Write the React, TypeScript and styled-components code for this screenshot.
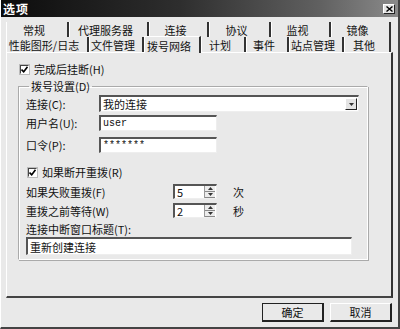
import { createGlobalStyle, styled } from "styled-components";

const GlobalStyle = createGlobalStyle`
  html, body {
    margin: 0;
    padding: 0;
    background: #e9e9e9;
  }
  * {
    box-sizing: border-box;
  }
`;

const font = `"Noto Sans CJK SC", "Liberation Sans", sans-serif`;

const Window = styled.div`
  width: 400px;
  height: 329px;
  background: #e9e9e9;
  border-right: 2px solid #444;
  border-bottom: 2px solid #444;
  border-left: 1px solid #fff;
  font-family: ${font};
  font-size: 11px;
  line-height: 12px;
  color: #111;
  display: flex;
  flex-direction: column;
  overflow: hidden;
`;

const TitleBar = styled.div`
  height: 17px;
  flex: none;
  display: flex;
  align-items: center;
  justify-content: space-between;
  padding: 0 3px 0 2px;
  background: linear-gradient(to right, #0c0c0c, #2e2e2e 45%, #606060 80%, #8a8a8a);
`;

const Title = styled.span`
  color: #fff;
  font-weight: bold;
  font-size: 12px;
  letter-spacing: 1px;
`;

const CloseButton = styled.div`
  width: 12px;
  height: 10px;
  background: #e4e4e4;
  border-top: 1px solid #fff;
  border-left: 1px solid #fff;
  border-right: 1px solid #222;
  border-bottom: 1px solid #222;
  display: flex;
  align-items: center;
  justify-content: center;
`;

const Body = styled.div`
  flex: 1;
  display: flex;
  flex-direction: column;
  padding: 5px 5px 0 5px;
`;

const TabRow = styled.div`
  display: flex;
  align-items: flex-start;
  height: 15px;
  flex: none;
`;

const Tab = styled.div<{ $w: number; $active?: boolean }>`
  width: ${(p) => p.$w}px;
  height: ${(p) => (p.$active ? 17 : 15)}px;
  margin-top: ${(p) => (p.$active ? -1 : 0)}px;
  display: flex;
  align-items: center;
  justify-content: center;
  padding: 1px 6px 0 0;
  border-right: 2px solid #333;
  border-left: 1px solid #fff;
  border-top: ${(p) => (p.$active ? "1px solid #fff" : "none")};
  background: #e9e9e9;
  font-size: 11px;
  line-height: 12px;
  white-space: nowrap;
  position: relative;
  z-index: ${(p) => (p.$active ? 2 : 1)};
`;

const Panel = styled.div`
  width: 387px;
  height: 246px;
  flex: none;
  border-top: 1px solid #fff;
  border-left: 1px solid #fff;
  border-right: 2px solid #333;
  border-bottom: 2px solid #444;
  padding: 10px 0 0 13px;
  display: flex;
  flex-direction: column;
`;

const CheckRow = styled.label<{ $mt?: number; $ml?: number }>`
  display: flex;
  align-items: center;
  gap: 5px;
  height: 12px;
  flex: none;
  margin-top: ${(p) => p.$mt ?? 0}px;
  margin-left: ${(p) => p.$ml ?? 0}px;
`;

const Box = styled.span`
  width: 9px;
  height: 9px;
  background: #fff;
  border-top: 1px solid #444;
  border-left: 1px solid #444;
  border-right: 1px solid #fff;
  border-bottom: 1px solid #fff;
  outline: 1px solid #bbb;
  display: flex;
  align-items: center;
  justify-content: center;
`;

const GroupBox = styled.fieldset`
  margin: 5px 0 0 -2px;
  width: 350px;
  height: 180px;
  flex: none;
  padding: 0 0 0 7px;
  border: 1px solid #aaa;
  border-right-color: #fff;
  border-bottom-color: #fff;
  box-shadow: 1px 1px 0 #aaa, inset 1px 1px 0 #fff;
  display: flex;
  flex-direction: column;
`;

const Legend = styled.legend`
  padding: 0 2px;
  margin-left: 3px;
  font-size: 11px;
  line-height: 12px;
`;

const FieldRow = styled.div<{ $mt?: number }>`
  display: flex;
  align-items: center;
  flex: none;
  margin-top: ${(p) => p.$mt ?? 0}px;
`;

const FieldLabel = styled.span<{ $w: number }>`
  width: ${(p) => p.$w}px;
  flex: none;
  white-space: nowrap;
`;

const Input = styled.div<{ $w: number; $h?: number; $mono?: boolean }>`
  width: ${(p) => p.$w}px;
  height: ${(p) => p.$h ?? 16}px;
  background: #fff;
  border-top: 2px solid #555;
  border-left: 2px solid #555;
  border-right: 1px solid #eee;
  border-bottom: 1px solid #eee;
  display: flex;
  align-items: center;
  justify-content: space-between;
  padding-left: 2px;
  font-family: ${(p) => (p.$mono ? `"Liberation Mono", monospace` : font)};
  font-size: ${(p) => (p.$mono ? 10 : 11)}px;
  white-space: nowrap;
`;

const DropButton = styled.span`
  width: 12px;
  height: 12px;
  margin-right: 1px;
  background: #e4e4e4;
  border-top: 1px solid #fff;
  border-left: 1px solid #fff;
  border-right: 1px solid #222;
  border-bottom: 1px solid #222;
  display: flex;
  align-items: center;
  justify-content: center;
`;

const SpinButtons = styled.span`
  width: 11px;
  height: 12px;
  margin-right: 1px;
  display: flex;
  flex-direction: column;
  border-left: 1px solid #999;
`;

const SpinHalf = styled.span`
  flex: 1;
  background: #ececec;
  border-bottom: 1px solid #888;
  display: flex;
  align-items: center;
  justify-content: center;
`;

const Unit = styled.span`
  margin-left: 16px;
`;

const Footer = styled.div`
  display: flex;
  justify-content: flex-end;
  gap: 6px;
  padding: 5px 1px 0 0;
`;

const Button = styled.div<{ $default?: boolean }>`
  width: 62px;
  height: 19px;
  display: flex;
  align-items: center;
  justify-content: center;
  background: #e9e9e9;
  border-top: 1px solid ${(p) => (p.$default ? "#222" : "#fff")};
  border-left: 1px solid ${(p) => (p.$default ? "#222" : "#fff")};
  border-right: 2px solid #222;
  border-bottom: 2px solid #222;
  font-size: 11px;
`;

const Arrow = ({ up }: { up?: boolean }) => (
  <svg width="5" height="3" viewBox="0 0 5 3">
    <path d={up ? "M2.5 0 L5 3 L0 3 Z" : "M0 0 L5 0 L2.5 3 Z"} fill="#333" />
  </svg>
);

const Check = () => (
  <svg width="7" height="7" viewBox="0 0 7 7">
    <path d="M0.5 3.5 L2.7 5.8 L6.5 0.8" stroke="#000" strokeWidth="1.6" fill="none" />
  </svg>
);

const Spin = () => (
  <SpinButtons>
    <SpinHalf>
      <Arrow up />
    </SpinHalf>
    <SpinHalf>
      <Arrow />
    </SpinHalf>
  </SpinButtons>
);

export default function App() {
  return (
    <>
      <GlobalStyle />
      <Window>
        <TitleBar>
          <Title>选项</Title>
          <CloseButton>
            <svg width="7" height="6" viewBox="0 0 7 6">
              <path d="M0.5 0.5 L6.5 5.5 M6.5 0.5 L0.5 5.5" stroke="#000" strokeWidth="1.4" />
            </svg>
          </CloseButton>
        </TitleBar>
        <Body>
          <TabRow>
            <Tab $w={63}>常规</Tab>
            <Tab $w={80}>代理服务器</Tab>
            <Tab $w={60}>连接</Tab>
            <Tab $w={62}>协议</Tab>
            <Tab $w={60}>监视</Tab>
            <Tab $w={60}>镜像</Tab>
          </TabRow>
          <TabRow>
            <Tab $w={83}>性能图形/日志</Tab>
            <Tab $w={55}>文件管理</Tab>
            <Tab $w={57} $active>
              拨号网络
            </Tab>
            <Tab $w={45}>计划</Tab>
            <Tab $w={43}>事件</Tab>
            <Tab $w={55}>站点管理</Tab>
            <Tab $w={47}>其他</Tab>
          </TabRow>
          <Panel>
            <CheckRow>
              <Box>
                <Check />
              </Box>
              完成后挂断(H)
            </CheckRow>
            <GroupBox>
              <Legend>拨号设置(D)</Legend>
              <FieldRow $mt={3}>
                <FieldLabel $w={73}>连接(C):</FieldLabel>
                <Input $w={260} $h={17}>
                  我的连接
                  <DropButton>
                    <Arrow />
                  </DropButton>
                </Input>
              </FieldRow>
              <FieldRow $mt={3}>
                <FieldLabel $w={73}>用户名(U):</FieldLabel>
                <Input $w={118} $mono>
                  user
                </Input>
              </FieldRow>
              <FieldRow $mt={6}>
                <FieldLabel $w={73}>口令(P):</FieldLabel>
                <Input $w={118} $mono>
                  *******
                </Input>
              </FieldRow>
              <CheckRow $mt={13} $ml={2}>
                <Box>
                  <Check />
                </Box>
                如果断开重拨(R)
              </CheckRow>
              <FieldRow $mt={6}>
                <FieldLabel $w={147}>如果失败重拨(F)</FieldLabel>
                <Input $w={44} $h={15}>
                  5
                  <Spin />
                </Input>
                <Unit>次</Unit>
              </FieldRow>
              <FieldRow $mt={4}>
                <FieldLabel $w={147}>重拨之前等待(W)</FieldLabel>
                <Input $w={44} $h={15}>
                  2
                  <Spin />
                </Input>
                <Unit>秒</Unit>
              </FieldRow>
              <FieldRow $mt={5}>
                <FieldLabel $w={200}>连接中断窗口标题(T):</FieldLabel>
              </FieldRow>
              <FieldRow $mt={2}>
                <Input $w={326} $h={18}>
                  重新创建连接
                </Input>
              </FieldRow>
            </GroupBox>
          </Panel>
          <Footer>
            <Button $default>确定</Button>
            <Button>取消</Button>
          </Footer>
        </Body>
      </Window>
    </>
  );
}
